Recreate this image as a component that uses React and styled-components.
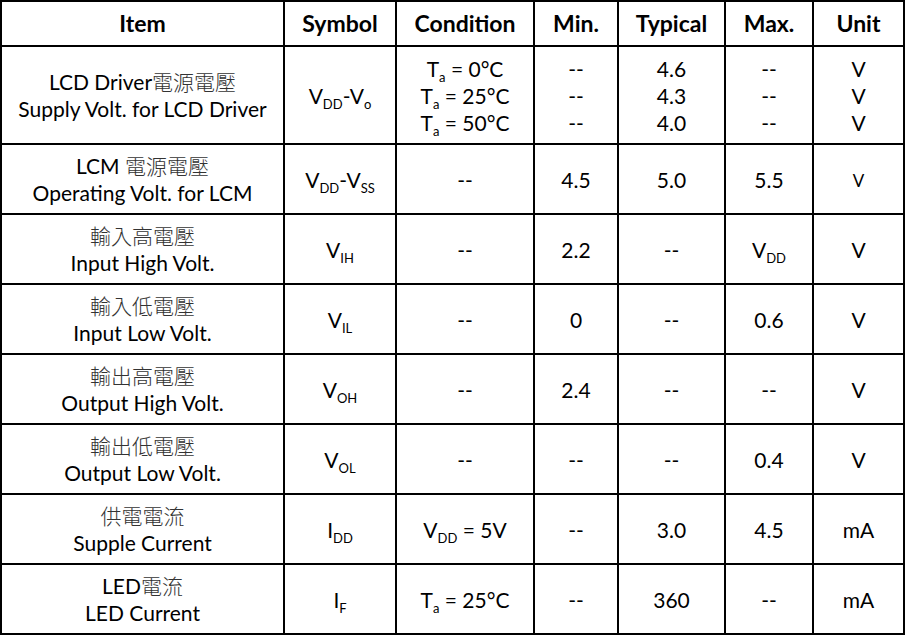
import styled, { createGlobalStyle } from 'styled-components';

const GlobalStyle = createGlobalStyle`
    html, body {
        margin: 0;
        padding: 0;
        background: #fff;
    }
    body {
        font-family: Lato, "Noto Sans CJK TC", sans-serif;
        color: #000;
    }
`

const Page = styled.div`
    padding: 0;
`

const SpecTable = styled.table`
    border-collapse: collapse;
    table-layout: fixed;
    width: 905px;
    font-size: 21px;
    line-height: 27px;
`

const HeadCell = styled.th`
    border: 2px solid #000;
    height: 43px;
    padding: 0;
    font-weight: 700;
    font-size: 23px;
    text-align: center;
    vertical-align: middle;
`

const Cell = styled.td`
    border: 2px solid #000;
    height: ${(p) => p.$h}px;
    padding: 0;
    text-align: center;
    vertical-align: middle;
    white-space: nowrap;
`

const Han = styled.span`
    font-family: "Noto Sans CJK TC", sans-serif;
    font-weight: 300;
    font-size: 21px;
    color: #333;
`

const Sub = styled.span`
    font-size: 13px;
    vertical-align: -5px;
    line-height: 0;
`

const SmallUnit = styled.span`
    font-size: 17px;
`

const Line = styled.div`
    line-height: 27px;
`

const cols = [283, 112, 138, 84, 107, 88, 91];
const heads = ['Item', 'Symbol', 'Condition', 'Min.', 'Typical', 'Max.', 'Unit'];

const Ta = ({ t }) => (
    <>T<Sub>a</Sub> = {t}°C</>
);

const rows = [
    {
        h: 96,
        item: [<>LCD Driver<Han>電源電壓</Han></>, 'Supply Volt. for LCD Driver'],
        symbol: <>V<Sub>DD</Sub>-V<Sub>o</Sub></>,
        cond: [<Ta t="0" />, <Ta t="25" />, <Ta t="50" />],
        min: ['--', '--', '--'],
        typ: ['4.6', '4.3', '4.0'],
        max: ['--', '--', '--'],
        unit: ['V', 'V', 'V'],
    },
    {
        h: 68,
        item: [<>LCM <Han>電源電壓</Han></>, 'Operating Volt. for LCM'],
        symbol: <>V<Sub>DD</Sub>-V<Sub>SS</Sub></>,
        cond: ['--'], min: ['4.5'], typ: ['5.0'], max: ['5.5'],
        unit: [<SmallUnit>V</SmallUnit>],
    },
    {
        h: 68,
        item: [<Han>輸入高電壓</Han>, 'Input High Volt.'],
        symbol: <>V<Sub>IH</Sub></>,
        cond: ['--'], min: ['2.2'], typ: ['--'], max: [<>V<Sub>DD</Sub></>], unit: ['V'],
    },
    {
        h: 68,
        item: [<Han>輸入低電壓</Han>, 'Input Low Volt.'],
        symbol: <>V<Sub>IL</Sub></>,
        cond: ['--'], min: ['0'], typ: ['--'], max: ['0.6'], unit: ['V'],
    },
    {
        h: 68,
        item: [<Han>輸出高電壓</Han>, 'Output High Volt.'],
        symbol: <>V<Sub>OH</Sub></>,
        cond: ['--'], min: ['2.4'], typ: ['--'], max: ['--'], unit: ['V'],
    },
    {
        h: 68,
        item: [<Han>輸出低電壓</Han>, 'Output Low Volt.'],
        symbol: <>V<Sub>OL</Sub></>,
        cond: ['--'], min: ['--'], typ: ['--'], max: ['0.4'], unit: ['V'],
    },
    {
        h: 68,
        item: [<Han>供電電流</Han>, 'Supple Current'],
        symbol: <>I<Sub>DD</Sub></>,
        cond: [<>V<Sub>DD</Sub> = 5V</>], min: ['--'], typ: ['3.0'], max: ['4.5'], unit: ['mA'],
    },
    {
        h: 68,
        item: [<>LED<Han>電流</Han></>, 'LED Current'],
        symbol: <>I<Sub>F</Sub></>,
        cond: [<Ta t="25" />], min: ['--'], typ: ['360'], max: ['--'], unit: ['mA'],
    },
];

const Lines = ({ items }) => items.map((x, i) => <Line key={i}>{x}</Line>);

const App = () => {
    return (
        <Page>
            <GlobalStyle />
            <SpecTable>
                <colgroup>
                    {cols.map((w, i) => <col key={i} style={{ width: w }} />)}
                </colgroup>
                <thead>
                    <tr>
                        {heads.map((h) => <HeadCell key={h}>{h}</HeadCell>)}
                    </tr>
                </thead>
                <tbody>
                    {rows.map((r, i) => (
                        <tr key={i}>
                            <Cell $h={r.h}><Lines items={r.item} /></Cell>
                            <Cell $h={r.h}>{r.symbol}</Cell>
                            <Cell $h={r.h}><Lines items={r.cond} /></Cell>
                            <Cell $h={r.h}><Lines items={r.min} /></Cell>
                            <Cell $h={r.h}><Lines items={r.typ} /></Cell>
                            <Cell $h={r.h}><Lines items={r.max} /></Cell>
                            <Cell $h={r.h}><Lines items={r.unit} /></Cell>
                        </tr>
                    ))}
                </tbody>
            </SpecTable>
        </Page>
    )
}

export default App;
